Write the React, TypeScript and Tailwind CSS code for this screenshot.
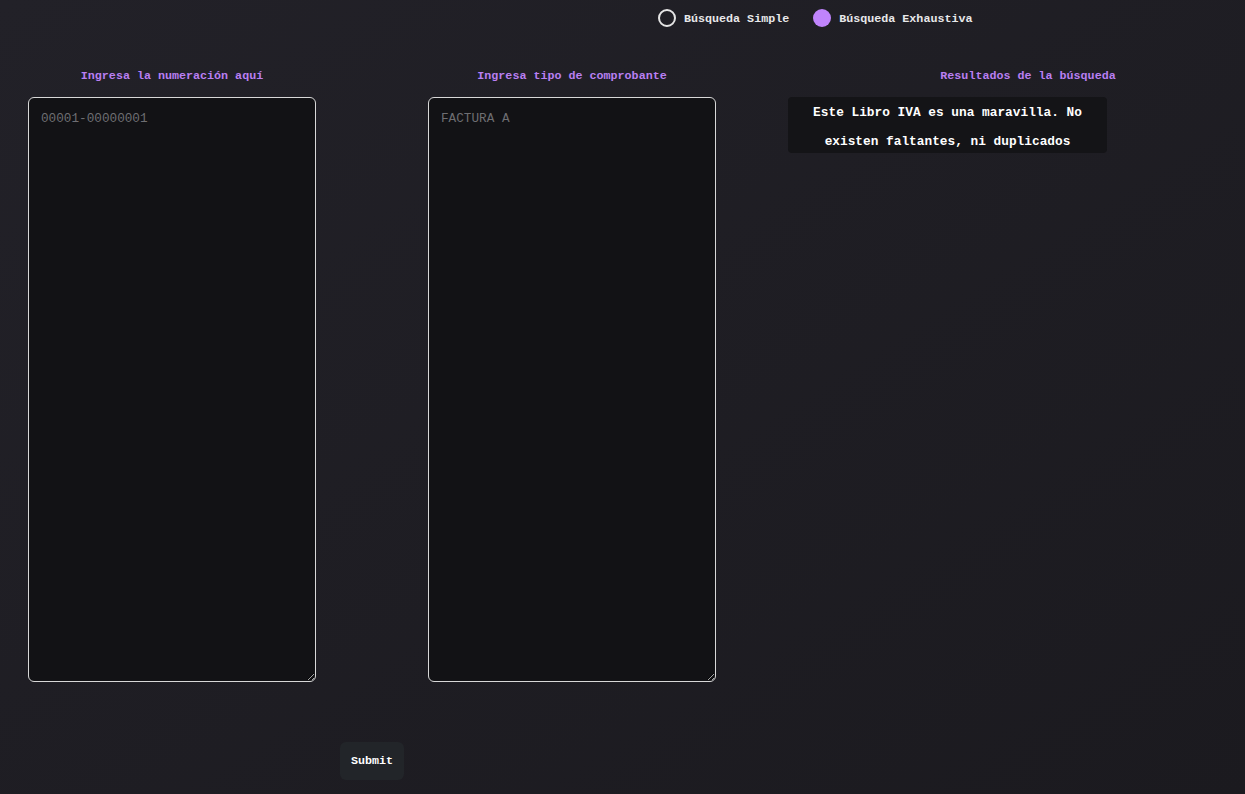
import { useState } from "react";

const mono = "font-['Liberation_Mono','DejaVu_Sans_Mono',monospace]";

type Mode = "simple" | "exhaustiva";

function Radio({ checked, label, onClick }: { checked: boolean; label: string; onClick: () => void }) {
    return (
        <button type="button" onClick={onClick} className="flex items-center gap-2">
            {checked ? (
                <span className="w-[18px] h-[18px] rounded-full bg-[#c084fc]" />
            ) : (
                <span className="w-[18px] h-[18px] rounded-full border-2 border-[#e5e5e5]" />
            )}
            <span className="pt-[3px] text-[11.7px] font-bold text-[#e8e8ea]">{label}</span>
        </button>
    );
}

export default function App() {
    const [mode, setMode] = useState<Mode>("exhaustiva");

    return (
        <div className={`min-h-screen overflow-hidden bg-gradient-to-br from-[#222128] to-[#1b1a1f] ${mono}`}>
            {/* search mode */}
            <div className="flex items-center gap-6 pl-[658px] pt-[9px] h-[27px]">
                <Radio checked={mode === "simple"} label="Búsqueda Simple" onClick={() => setMode("simple")} />
                <Radio checked={mode === "exhaustiva"} label="Búsqueda Exhaustiva" onClick={() => setMode("exhaustiva")} />
            </div>

            <div className="flex pl-[28px] pt-[39px]">
                <div className="w-[288px] shrink-0 flex flex-col">
                    <label className="text-center text-[11.7px] font-bold text-[#b97ff2] leading-[18px] pt-px">
                        Ingresa la numeración aquí
                    </label>
                    <textarea
                        placeholder="00001-00000001"
                        className="mt-[12px] h-[585px] rounded-md border border-[#d8d8d8] bg-[#121215] px-3 pt-[11px] pb-3 text-[12.7px] text-gray-200 placeholder:text-[#6e6e72] outline-none"
                    />
                </div>

                <div className="w-[288px] shrink-0 ml-[112px] flex flex-col">
                    <label className="text-center text-[11.7px] font-bold text-[#b97ff2] leading-[18px] pt-px">
                        Ingresa tipo de comprobante
                    </label>
                    <textarea
                        placeholder="FACTURA A"
                        className="mt-[12px] h-[585px] rounded-md border border-[#d8d8d8] bg-[#121215] px-3 pt-[11px] pb-3 text-[12.7px] text-gray-200 placeholder:text-[#6e6e72] outline-none"
                    />
                </div>

                <div className="w-[400px] shrink-0 ml-[72px] flex flex-col">
                    <p className="pl-[80px] text-center text-[11.7px] font-bold text-[#b97ff2] leading-[18px] pt-px">
                        Resultados de la búsqueda
                    </p>
                    <div className="mt-[12px] w-[319px] h-[56px] rounded bg-[#141417] flex items-center justify-center text-center">
                        <p className="pt-[3px] text-[12.8px] font-bold text-white leading-[29px]">
                            Este Libro IVA es una maravilla. No
                            <br />
                            existen faltantes, ni duplicados
                        </p>
                    </div>
                </div>
            </div>

            <div className="pl-[340px] pt-[60px]">
                <button
                    type="button"
                    className="h-[38px] w-[64px] pt-[2px] rounded-md bg-[#222529] text-[11.7px] font-bold text-white"
                >
                    Submit
                </button>
            </div>
        </div>
    );
}
